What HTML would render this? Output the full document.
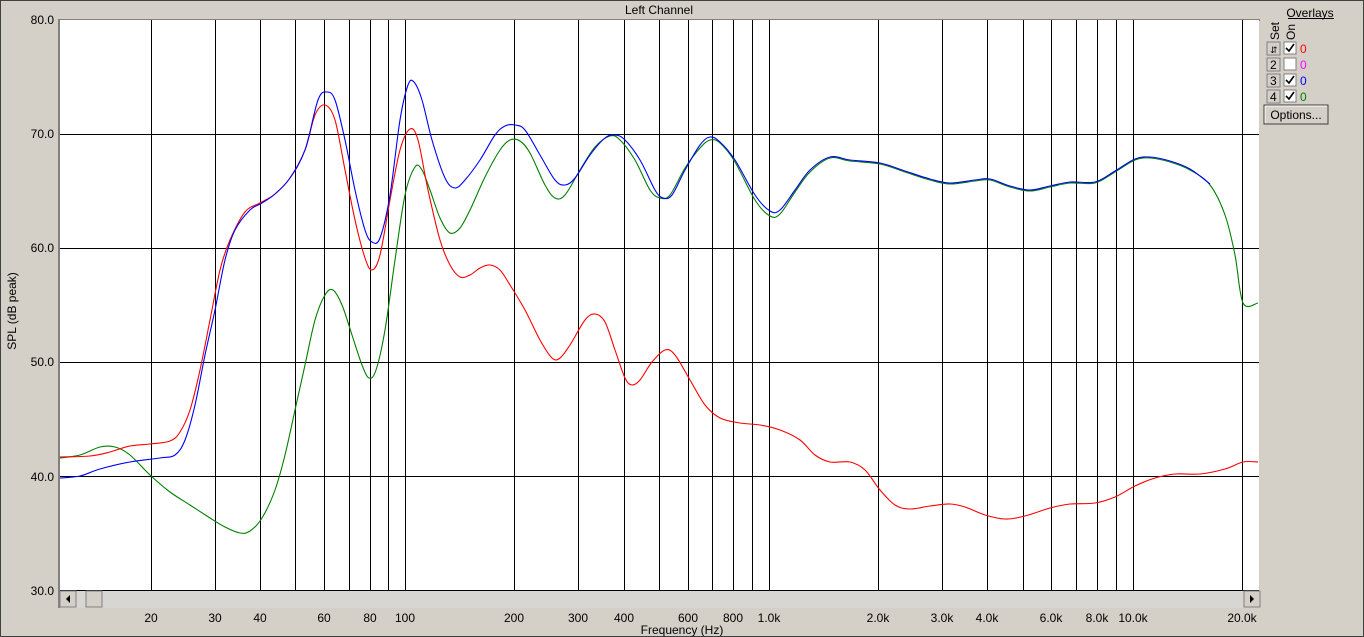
<!DOCTYPE html>
<html><head><meta charset="utf-8"><style>
body{margin:0;width:1364px;height:637px;background:#d4d0c8;font-family:"Liberation Sans",sans-serif;overflow:hidden}
</style></head><body>
<svg id="s" width="1364" height="637" xmlns="http://www.w3.org/2000/svg" style="position:absolute;left:0;top:0;font-family:'Liberation Sans',sans-serif">
<rect x="0.5" y="0.5" width="1363" height="636" fill="#d4d0c8" stroke="#404040"/>
<rect x="58" y="19" width="1202" height="2" fill="#808080"/>
<rect x="58" y="19" width="2" height="589" fill="#808080"/>
<rect x="60" y="20" width="1199" height="571" fill="#fff"/>
<g stroke="#000" stroke-width="1">
<line x1="60" y1="134.5" x2="1259" y2="134.5"/><line x1="60" y1="248.5" x2="1259" y2="248.5"/><line x1="60" y1="362.5" x2="1259" y2="362.5"/><line x1="60" y1="476.5" x2="1259" y2="476.5"/><line x1="60" y1="590.5" x2="1259" y2="590.5"/>
<line x1="151.5" y1="20" x2="151.5" y2="591"/><line x1="215.5" y1="20" x2="215.5" y2="591"/><line x1="260.5" y1="20" x2="260.5" y2="591"/><line x1="295.5" y1="20" x2="295.5" y2="591"/><line x1="324.5" y1="20" x2="324.5" y2="591"/><line x1="349.5" y1="20" x2="349.5" y2="591"/><line x1="370.5" y1="20" x2="370.5" y2="591"/><line x1="388.5" y1="20" x2="388.5" y2="591"/><line x1="405.5" y1="20" x2="405.5" y2="591"/><line x1="514.5" y1="20" x2="514.5" y2="591"/><line x1="578.5" y1="20" x2="578.5" y2="591"/><line x1="624.5" y1="20" x2="624.5" y2="591"/><line x1="659.5" y1="20" x2="659.5" y2="591"/><line x1="688.5" y1="20" x2="688.5" y2="591"/><line x1="712.5" y1="20" x2="712.5" y2="591"/><line x1="733.5" y1="20" x2="733.5" y2="591"/><line x1="752.5" y1="20" x2="752.5" y2="591"/><line x1="769.5" y1="20" x2="769.5" y2="591"/><line x1="878.5" y1="20" x2="878.5" y2="591"/><line x1="942.5" y1="20" x2="942.5" y2="591"/><line x1="987.5" y1="20" x2="987.5" y2="591"/><line x1="1023.5" y1="20" x2="1023.5" y2="591"/><line x1="1051.5" y1="20" x2="1051.5" y2="591"/><line x1="1076.5" y1="20" x2="1076.5" y2="591"/><line x1="1097.5" y1="20" x2="1097.5" y2="591"/><line x1="1116.5" y1="20" x2="1116.5" y2="591"/><line x1="1133.5" y1="20" x2="1133.5" y2="591"/><line x1="1242.5" y1="20" x2="1242.5" y2="591"/>
</g>
<g id="curves" fill="none" stroke-width="1.1" stroke-linejoin="round">
<polyline stroke="#008000" points="60,458 80,455 100,447 115,447 130,455 150,475 170,492 190,505 210,518 225,527 240,533 250,531 262,518 275,490 285,455 295,410 305,365 315,320 325,295 333,290 342,305 352,335 362,365 369,378 376,370 385,330 395,260 405,195 415,167 422,170 430,190 440,218 450,233 460,228 470,210 485,177 500,150 510,140 520,141 530,153 545,185 555,198 565,195 580,170 595,147 610,136 620,140 635,160 650,190 660,198 670,195 685,168 700,148 710,140 720,143 735,162 755,200 770,216 780,214 795,192 810,172 830,158 850,161 880,164 905,172 930,180 950,184 975,181 990,180 1010,187 1030,191 1050,187 1070,183 1095,183 1115,172 1135,160 1150,158 1170,162 1190,170 1210,185 1225,215 1235,255 1243,303 1258,303"/>
<polyline stroke="#ff0000" points="60,457 90,456 110,452 130,446 150,444 170,441 180,432 190,410 200,370 210,320 220,270 230,240 245,212 260,203 275,194 290,178 305,150 315,115 325,105 335,120 345,170 355,220 365,258 372,270 380,255 390,200 400,150 410,129 418,140 428,190 440,240 450,265 460,277 470,275 480,268 490,265 500,270 510,285 525,310 540,340 552,358 560,358 570,345 585,320 595,314 605,322 615,350 625,378 632,385 640,380 652,362 665,350 675,355 690,380 705,405 720,418 740,423 760,425 780,430 800,440 815,455 830,462 850,462 865,470 880,490 895,505 910,509 930,506 950,504 965,507 985,515 1005,519 1025,516 1050,508 1070,504 1095,503 1115,497 1135,486 1155,478 1175,474 1200,474 1225,469 1243,462 1258,462"/>
<polyline stroke="#0000ff" points="60,478 80,476 100,469 130,462 160,458 175,455 185,440 195,405 205,355 215,310 225,260 235,230 250,210 262,203 275,194 290,178 305,150 318,100 327,92 335,100 345,140 355,190 365,230 372,242 380,238 390,195 400,120 408,85 414,82 422,100 432,140 445,178 455,188 465,180 480,160 495,135 505,126 515,125 525,130 540,155 555,180 565,185 575,178 590,155 605,138 615,135 625,140 640,160 655,190 663,198 672,195 685,170 700,145 710,137 720,142 735,160 755,195 770,211 780,210 795,190 810,170 830,157 850,160 880,163 905,171 930,179 950,183 975,180 990,179 1010,186 1030,190 1050,186 1070,182 1095,182 1115,171 1135,159 1150,157 1170,161 1190,169 1210,184"/>
</g>
<rect x="60" y="591" width="1200" height="17" fill="#e8e6e2"/>
<rect x="60" y="591" width="1200" height="17" fill="#c8c6c2" opacity="0.5"/>
<rect x="60" y="591" width="16" height="16" fill="#d4d0c8" stroke="#808080"/>
<polygon points="70,595 66,599 70,603" fill="#000"/>
<rect x="86" y="591" width="16" height="16" fill="#d4d0c8" stroke="#808080"/>
<rect x="1244" y="591" width="16" height="16" fill="#d4d0c8" stroke="#808080"/>
<polygon points="1250,595 1254,599 1250,603" fill="#000"/>
<g font-size="12" fill="#000" text-anchor="end">
<text x="54" y="24">80.0</text><text x="54" y="138">70.0</text><text x="54" y="252">60.0</text><text x="54" y="366">50.0</text><text x="54" y="481">40.0</text><text x="54" y="595">30.0</text>
</g>
<g font-size="12" fill="#000" text-anchor="middle">
<text x="151" y="622">20</text><text x="215" y="622">30</text><text x="260" y="622">40</text><text x="324" y="622">60</text><text x="370" y="622">80</text><text x="405" y="622">100</text><text x="514" y="622">200</text><text x="578" y="622">300</text><text x="624" y="622">400</text><text x="688" y="622">600</text><text x="733" y="622">800</text><text x="769" y="622">1.0k</text><text x="878" y="622">2.0k</text><text x="942" y="622">3.0k</text><text x="987" y="622">4.0k</text><text x="1051" y="622">6.0k</text><text x="1097" y="622">8.0k</text><text x="1133" y="622">10.0k</text><text x="1242" y="622">20.0k</text>
<text x="659" y="14">Left Channel</text>
<text x="682" y="634">Frequency (Hz)</text>
</g>
<text font-size="12" transform="translate(16,311) rotate(-90)" text-anchor="middle">SPL (dB peak)</text>
<text x="1310" y="17" font-size="12" text-anchor="middle">Overlays</text>
<line x1="1288" y1="18.5" x2="1334" y2="18.5" stroke="#000"/>
<text font-size="12" transform="translate(1279,40) rotate(-90)">Set</text>
<text font-size="12" transform="translate(1295,40) rotate(-90)">On</text>
<g font-size="12">
<rect x="1267" y="42" width="13" height="13" fill="#d4d0c8" stroke="#808080"/><text x="1270" y="53" font-size="9">⇵</text>
<rect x="1267" y="58" width="13" height="13" fill="#d4d0c8" stroke="#808080"/><text x="1270" y="69">2</text>
<rect x="1267" y="74" width="13" height="13" fill="#d4d0c8" stroke="#808080"/><text x="1270" y="85">3</text>
<rect x="1267" y="90" width="13" height="13" fill="#d4d0c8" stroke="#808080"/><text x="1270" y="101">4</text>
<rect x="1284" y="42" width="12" height="12" fill="#fff" stroke="#808080"/><polyline points="1286,48 1289,51 1294,44" fill="none" stroke="#000" stroke-width="1.6"/>
<rect x="1284" y="58" width="12" height="12" fill="#fff" stroke="#808080"/>
<rect x="1284" y="74" width="12" height="12" fill="#fff" stroke="#808080"/><polyline points="1286,80 1289,83 1294,76" fill="none" stroke="#000" stroke-width="1.6"/>
<rect x="1284" y="90" width="12" height="12" fill="#fff" stroke="#808080"/><polyline points="1286,96 1289,99 1294,92" fill="none" stroke="#000" stroke-width="1.6"/>
<text x="1300" y="53" fill="#ff0000">0</text><text x="1300" y="69" fill="#ff00ff">0</text><text x="1300" y="85" fill="#0000ff">0</text><text x="1300" y="101" fill="#008000">0</text>
<rect x="1264" y="105" width="64" height="19" fill="#d4d0c8" stroke="#404040"/>
<line x1="1265" y1="106" x2="1327" y2="106" stroke="#fff"/><line x1="1265" y1="106" x2="1265" y2="123" stroke="#fff"/>
<text x="1296" y="119" text-anchor="middle">Options...</text>
</g>
</svg>
<script>
document.querySelectorAll('#curves polyline').forEach(function(pl){
  var p=pl.getAttribute('points').trim().split(/\s+/).map(function(s){return s.split(',').map(Number);});
  var d='M'+p[0][0]+','+p[0][1];
  for(var i=0;i<p.length-1;i++){
    var p0=p[i-1]||p[i],p1=p[i],p2=p[i+1],p3=p[i+2]||p2;
    var c1x=p1[0]+(p2[0]-p0[0])/6,c1y=p1[1]+(p2[1]-p0[1])/6;
    var c2x=p2[0]-(p3[0]-p1[0])/6,c2y=p2[1]-(p3[1]-p1[1])/6;
    d+=' C'+c1x.toFixed(1)+','+c1y.toFixed(1)+' '+c2x.toFixed(1)+','+c2y.toFixed(1)+' '+p2[0]+','+p2[1];
  }
  var path=document.createElementNS('http://www.w3.org/2000/svg','path');
  path.setAttribute('d',d);path.setAttribute('stroke',pl.getAttribute('stroke'));
  pl.parentNode.replaceChild(path,pl);
});
</script>
</body></html>
